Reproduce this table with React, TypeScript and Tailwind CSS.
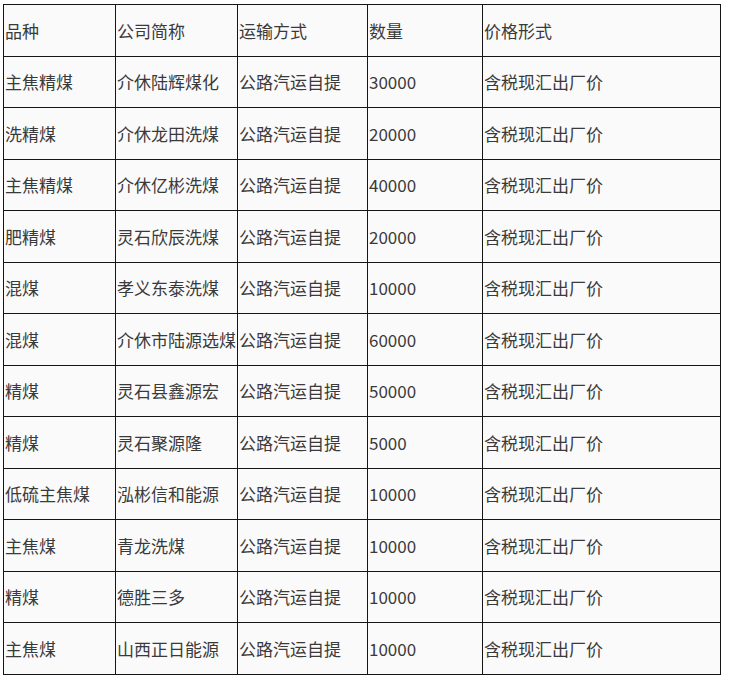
import React from "react";

const header = ["品种", "公司简称", "运输方式", "数量", "价格形式"];
const rows: string[][] = [
  ["主焦精煤", "介休陆辉煤化", "公路汽运自提", "30000", "含税现汇出厂价"],
  ["洗精煤", "介休龙田洗煤", "公路汽运自提", "20000", "含税现汇出厂价"],
  ["主焦精煤", "介休亿彬洗煤", "公路汽运自提", "40000", "含税现汇出厂价"],
  ["肥精煤", "灵石欣辰洗煤", "公路汽运自提", "20000", "含税现汇出厂价"],
  ["混煤", "孝义东泰洗煤", "公路汽运自提", "10000", "含税现汇出厂价"],
  ["混煤", "介休市陆源选煤", "公路汽运自提", "60000", "含税现汇出厂价"],
  ["精煤", "灵石县鑫源宏", "公路汽运自提", "50000", "含税现汇出厂价"],
  ["精煤", "灵石聚源隆", "公路汽运自提", "5000", "含税现汇出厂价"],
  ["低硫主焦煤", "泓彬信和能源", "公路汽运自提", "10000", "含税现汇出厂价"],
  ["主焦煤", "青龙洗煤", "公路汽运自提", "10000", "含税现汇出厂价"],
  ["精煤", "德胜三多", "公路汽运自提", "10000", "含税现汇出厂价"],
  ["主焦煤", "山西正日能源", "公路汽运自提", "10000", "含税现汇出厂价"],
];

export default function App() {
  const all = [header, ...rows];
  return (
    <div className="w-[729px] h-[678px] bg-white pt-[4px] pl-[3px]">
      <div
        className="grid grid-cols-[112px_122px_130px_115px_238px] auto-rows-[51.5px] w-max border-l border-t border-[#151515] bg-[#fbfafb] text-[17px] text-[#3a3a3a]"
        style={{ fontFamily: '"Noto Sans CJK SC", "Noto Sans", sans-serif' }}
      >
        {all.map((r, i) =>
          r.map((c, j) => (
            <div
              key={`${i}-${j}`}
              className="flex items-center pl-px border-r border-b border-[#151515] whitespace-nowrap overflow-hidden leading-none"
            >
              {c}
            </div>
          ))
        )}
      </div>
    </div>
  );
}
